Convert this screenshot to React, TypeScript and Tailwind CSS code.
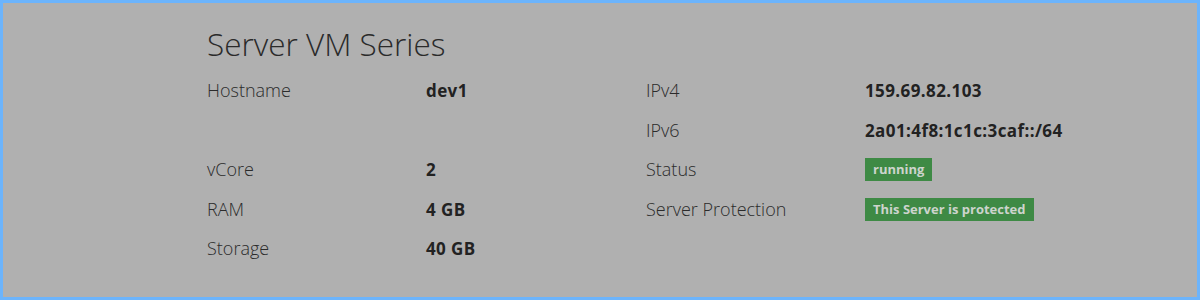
import React from "react";

interface Cell {
  label: string;
  value?: string;
  badge?: boolean;
}

const rows: [Cell | null, Cell | null][] = [
  [{ label: "Hostname", value: "dev1" }, { label: "IPv4", value: "159.69.82.103" }],
  [null, { label: "IPv6", value: "2a01:4f8:1c1c:3caf::/64" }],
  [{ label: "vCore", value: "2" }, { label: "Status", value: "running", badge: true }],
  [{ label: "RAM", value: "4 GB" }, { label: "Server Protection", value: "This Server is protected", badge: true }],
  [{ label: "Storage", value: "40 GB" }, null],
];

function Pair({ cell }: { cell: Cell | null }) {
  if (!cell) {
    return (
      <>
        <div />
        <div />
      </>
    );
  }
  return (
    <>
      <div className="font-light text-[18px] text-[#2b2b2b] flex items-center">{cell.label}</div>
      <div className="flex items-center">
        {cell.badge ? (
          <span className="bg-[#3e8a45] text-[#cdd4cd] font-bold text-[13px] leading-none px-[8px] py-[5px]">
            {cell.value}
          </span>
        ) : (
          <span className="font-bold text-[17px] tracking-[0.4px] text-[#222]">{cell.value}</span>
        )}
      </div>
    </>
  );
}

export default function App() {
  return (
    <div
      className="h-[300px] w-[1200px] border-[3px] border-[#6cb4fc] bg-[#b0b0b0]"
      style={{ fontFamily: "'Open Sans', Lato, sans-serif" }}
    >
      <div className="pl-[204px] pt-[23px]">
        <h1 className="font-light text-[31.5px] leading-[36px] text-[#2a2a2a] mb-[9px]">Server VM Series</h1>
        <div className="grid grid-cols-[219px_220px_219px_240px] auto-rows-[39.5px]">
          {rows.map(([left, right], i) => (
            <React.Fragment key={i}>
              <Pair cell={left} />
              <Pair cell={right} />
            </React.Fragment>
          ))}
        </div>
      </div>
    </div>
  );
}
